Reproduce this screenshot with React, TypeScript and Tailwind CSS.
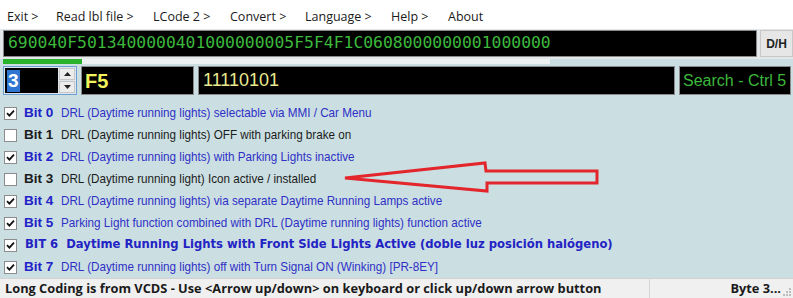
import React from 'react';

const menu = [
  { label: 'Exit >', w: 'w-[49px]' },
  { label: 'Read lbl file >', w: 'w-[97px]' },
  { label: 'LCode 2 >', w: 'w-[77px]' },
  { label: 'Convert >', w: 'w-[75px]' },
  { label: 'Language >', w: 'w-[86px]' },
  { label: 'Help >', w: 'w-[57px]' },
  { label: 'About', w: 'w-[50px]' },
];

const bits = [
  { bit: 'Bit 0', text: 'DRL (Daytime running lights) selectable via MMI / Car Menu', on: true },
  { bit: 'Bit 1', text: 'DRL (Daytime running lights) OFF with parking brake on', on: false },
  { bit: 'Bit 2', text: 'DRL (Daytime running lights) with Parking Lights inactive', on: true },
  { bit: 'Bit 3', text: 'DRL (Daytime running light) Icon active / installed', on: false },
  { bit: 'Bit 4', text: 'DRL (Daytime running lights) via separate Daytime Running Lamps active', on: true },
  { bit: 'Bit 5', text: 'Parking Light function combined with DRL (Daytime running lights) function active', on: true },
  { bit: 'BIT 6', text: 'Daytime Running Lights with Front Side Lights Active (doble luz posición halógeno)', on: true, bold: true },
  { bit: 'Bit 7', text: 'DRL (Daytime running lights) off with Turn Signal ON (Winking) [PR-8EY]', on: true },
];

function CheckBox({ on }: { on: boolean }) {
  return (
    <div className="w-[13px] h-[13px] bg-white border border-[#8c8c8c] flex items-center justify-center shrink-0">
      {on && (
        <svg width="9" height="9" viewBox="0 0 9 9">
          <path d="M1 4.2 L3.4 6.6 L8 1.6" fill="none" stroke="#111" strokeWidth="1.8" />
        </svg>
      )}
    </div>
  );
}

function Arrow() {
  return (
    <svg className="absolute left-0 top-0 pointer-events-none" width="793" height="298">
      <polygon
        points="345,178 485,163 486,171 597,171 597,183 487,183 487,191"
        fill="none"
        stroke="#e3262b"
        strokeWidth="3"
        strokeLinejoin="miter"
      />
    </svg>
  );
}

function Grip() {
  return (
    <svg width="8" height="8" viewBox="0 0 8 8" className="absolute right-[2px] bottom-[2px]">
      <rect x="6" y="0" width="2" height="2" fill="#bdbdbd" />
      <rect x="3" y="3" width="2" height="2" fill="#bdbdbd" />
      <rect x="6" y="3" width="2" height="2" fill="#bdbdbd" />
      <rect x="0" y="6" width="2" height="2" fill="#bdbdbd" />
      <rect x="3" y="6" width="2" height="2" fill="#bdbdbd" />
      <rect x="6" y="6" width="2" height="2" fill="#bdbdbd" />
    </svg>
  );
}

export default function App() {
  return (
    <div className="relative w-[793px] h-[298px] overflow-hidden flex flex-col bg-[#cbdfe2] font-['Open_Sans',sans-serif]">
      {/* menu */}
      <div className="h-[29px] bg-white flex items-center pt-[5px] pl-[7px] text-[12.5px] text-[#1a1a1a] shrink-0">
        {menu.map((m) => (
          <span key={m.label} className={m.w}>
            {m.label}
          </span>
        ))}
      </div>

      {/* coding string */}
      <div className="bg-[#e2e8e9] pl-[3px] pt-[1px] pb-[2px] flex gap-[3px] shrink-0">
        <div className="flex-1 h-[27px] bg-black border border-[#8a8a8a] flex items-center pl-[4px] font-['DejaVu_Sans_Mono',monospace] text-[16.4px] text-[#3cb83c]">
          690040F5013400000401000000005F5F4F1C0608000000001000000
        </div>
        <div className="w-[33px] h-[27px] bg-[#e6e6e6] border border-[#c8c8c8] flex items-center justify-center text-[12px] font-bold text-[#222] font-['Liberation_Sans',sans-serif]">
          D/H
        </div>
      </div>

      {/* progress */}
      <div className="h-[7px] flex items-start pl-[3px] shrink-0">
        <div className="w-[547px] h-[5px] bg-[#eef1f1] flex">
          <div className="w-[79px] h-full bg-[#29b32c]" />
        </div>
      </div>

      {/* inputs */}
      <div className="h-[29px] pl-[3px] pr-[2px] flex gap-[4px] shrink-0">
        <div className="w-[74px] h-full border border-[#6f9fd2] bg-[#dbe6ee] flex p-[1px] gap-[1px]">
          <div className="flex-1 bg-black flex items-center pl-[2px]">
            <span className="bg-[#2f76d2] text-white font-bold text-[19px] leading-[22px] px-[1px] font-['Liberation_Sans',sans-serif]">3</span>
          </div>
          <div className="w-[16px] flex flex-col gap-[1px]">
            <div className="flex-1 bg-[#ececec] border border-[#c6c6c6] flex items-center justify-center">
              <svg width="7" height="4" viewBox="0 0 7 4"><path d="M0 4 L3.5 0 L7 4Z" fill="#222" /></svg>
            </div>
            <div className="flex-1 bg-[#ececec] border border-[#c6c6c6] flex items-center justify-center">
              <svg width="7" height="4" viewBox="0 0 7 4"><path d="M0 0 L3.5 4 L7 0Z" fill="#222" /></svg>
            </div>
          </div>
        </div>
        <div className="w-[113px] h-full bg-black border border-[#8a8a8a] flex items-center pl-[3px] text-[20px] font-bold text-[#f2f25a] font-['Liberation_Sans',sans-serif]">
          F5
        </div>
        <div className="flex-1 h-full bg-black border border-[#8a8a8a] flex items-center pl-[4px] text-[18px] text-[#e9e98e] font-['Liberation_Sans',sans-serif]">
          11110101
        </div>
        <div className="w-[112px] h-full bg-black border border-[#8a8a8a] flex items-center pl-[3px] text-[16px] text-[#3cb83c] font-['Liberation_Sans',sans-serif] whitespace-nowrap">
          Search - Ctrl 5
        </div>
      </div>

      {/* bits */}
      <div className="flex-1 flex flex-col pt-[7px] pl-[4px] font-['Liberation_Sans',sans-serif]">
        {bits.map((b) => {
          const blue = b.on;
          return (
            <div key={b.bit} className="h-[22px] flex items-center gap-[7px] whitespace-nowrap">
              <CheckBox on={b.on} />
              {b.bold ? (
                <span className="font-['DejaVu_Sans',sans-serif] font-bold text-[11.6px] text-[#2323c4] pl-[1px]">
                  {b.bit}&nbsp;&nbsp;{b.text}
                </span>
              ) : (
                <>
                  <span className={`w-[30px] font-bold text-[13.5px] ${blue ? 'text-[#2222c8]' : 'text-[#1b1b1b]'}`}>{b.bit}</span>
                  <span className={`text-[13.5px] scale-x-[0.865] origin-left ${blue ? 'text-[#2f2fc6]' : 'text-[#1b1b1b]'}`}>{b.text}</span>
                </>
              )}
            </div>
          );
        })}
      </div>

      {/* status bar */}
      <div className="relative h-[20px] bg-[#f0f0f0] border-t border-[#d2d2d2] flex items-center text-[12.8px] font-bold text-[#1a1a1a] shrink-0">
        <div className="w-[650px] pl-[5px] border-r border-[#d6d6d6] h-full flex items-center whitespace-nowrap">
          Long Coding is from VCDS - Use &lt;Arrow up/down&gt; on keyboard or click up/down arrow button
        </div>
        <div className="flex-1 flex items-center justify-end pr-[12px]">Byte 3...</div>
        <Grip />
      </div>

      <Arrow />
    </div>
  );
}
